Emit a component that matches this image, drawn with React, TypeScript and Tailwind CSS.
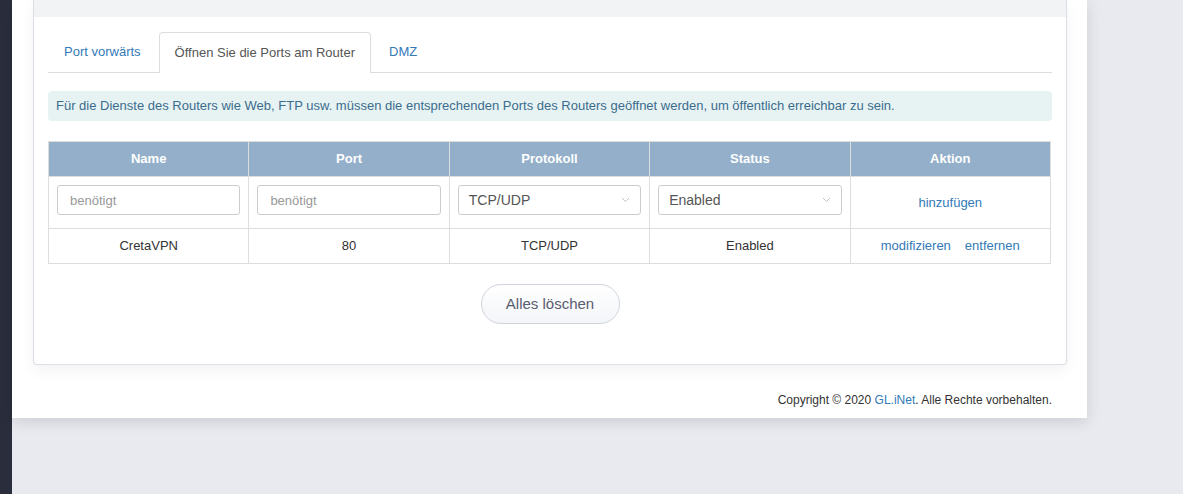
import React from "react";

const Chevron = () => (
  <svg width="9" height="6" viewBox="0 0 9 6" className="shrink-0">
    <path d="M1 1 L4.5 4.5 L8 1" fill="none" stroke="#c0c4cc" strokeWidth="1" />
  </svg>
);

export default function App() {
  const font = { fontFamily: '"Liberation Sans", Arial, sans-serif' };
  const th = "border border-[#dddddd] h-[35px] text-center font-bold text-white text-[13px]";
  const base = "border border-[#dddddd] text-center text-[13px]";
  const td = base + " text-[#333333]";
  const tdLink = base + " text-[#337ab7]";
  const tdInput = base + " align-top px-[8px] pt-[8px]";
  return (
    <div className="flex h-[494px] w-full bg-[#e9eaef]" style={font}>
      <div className="w-[12px] shrink-0 bg-[#2a2e3c]" />
      <div className="flex flex-col">
        <div className="flex h-[418px] w-[1075px] flex-col bg-white px-[21px] shadow-[0_4px_14px_rgba(0,0,0,0.12)]">
          <div className="flex w-[1034px] flex-col rounded-b-[4px] border border-t-0 border-[#dcdfe6] bg-white shadow-[0_6px_14px_rgba(0,0,0,0.05)]">
            <div className="h-[17px] bg-[#f2f3f5]" />
            <div className="flex flex-col px-[14px] pb-[40px] pt-[16px]">
              <div className="flex h-[40px] items-end border-b border-[#dddddd]">
                <div className="mr-[2px] flex h-[40px] items-center px-[16px] text-[13px] text-[#337ab7]">
                  Port vorwärts
                </div>
                <div className="mb-[-1px] mr-[2px] flex h-[41px] items-center rounded-t-[4px] border border-b-0 border-[#dddddd] bg-white px-[15px] text-[13px] text-[#555555]">
                  Öffnen Sie die Ports am Router
                </div>
                <div className="flex h-[40px] items-center px-[16px] text-[13px] text-[#337ab7]">
                  DMZ
                </div>
              </div>
              <div className="mt-[18px] flex h-[30px] items-center rounded-[4px] bg-[#e7f3f3] px-[8px] text-[13px] text-[#3b6c8e]">
                Für die Dienste des Routers wie Web, FTP usw. müssen die entsprechenden Ports des Routers geöffnet werden, um öffentlich erreichbar zu sein.
              </div>
              <table className="mt-[20px] w-[1003px] table-fixed border-collapse">
                <thead>
                  <tr className="bg-[#94afc9]">
                    <th className={th}>Name</th>
                    <th className={th}>Port</th>
                    <th className={th}>Protokoll</th>
                    <th className={th}>Status</th>
                    <th className={th}>Aktion</th>
                  </tr>
                </thead>
                <tbody>
                  <tr className="h-[52px]">
                    <td className={tdInput}>
                      <input
                        placeholder="benötigt"
                        className="h-[30px] w-full rounded-[3px] border border-[#cccccc] px-[12px] text-[13px] text-[#555555] outline-none placeholder:text-[#999999]"
                        style={font}
                      />
                    </td>
                    <td className={tdInput}>
                      <input
                        placeholder="benötigt"
                        className="h-[30px] w-full rounded-[3px] border border-[#cccccc] px-[12px] text-[13px] text-[#555555] outline-none placeholder:text-[#999999]"
                        style={font}
                      />
                    </td>
                    <td className={tdInput}>
                      <div className="flex h-[30px] w-full items-center justify-between rounded-[3px] border border-[#cccccc] pl-[10px] pr-[10px] text-left text-[14px] text-[#555555]">
                        <span>TCP/UDP</span>
                        <Chevron />
                      </div>
                    </td>
                    <td className={tdInput}>
                      <div className="flex h-[30px] w-full items-center justify-between rounded-[3px] border border-[#cccccc] pl-[10px] pr-[10px] text-left text-[14px] text-[#555555]">
                        <span>Enabled</span>
                        <Chevron />
                      </div>
                    </td>
                    <td className={tdLink}>hinzufügen</td>
                  </tr>
                  <tr className="h-[35px]">
                    <td className={td}>CretaVPN</td>
                    <td className={td}>80</td>
                    <td className={td}>TCP/UDP</td>
                    <td className={td}>Enabled</td>
                    <td className={tdLink}>
                      <span>modifizieren</span>
                      <span className="ml-[14px]">entfernen</span>
                    </td>
                  </tr>
                </tbody>
              </table>
              <div className="mt-[20px] flex justify-center">
                <button className="h-[40px] w-[139px] rounded-full border border-[#cfd3de] bg-gradient-to-b from-white to-[#f3f5f8] text-[15px] text-[#585c6e]" style={font}>
                  Alles löschen
                </button>
              </div>
            </div>
          </div>
          <div className="mt-[26px] flex justify-end pr-[14px] text-[12px] text-[#333333]">
            <span>
              Copyright © 2020 <span className="text-[#337ab7]">GL.iNet</span>. Alle Rechte vorbehalten.
            </span>
          </div>
        </div>
      </div>
    </div>
  );
}
